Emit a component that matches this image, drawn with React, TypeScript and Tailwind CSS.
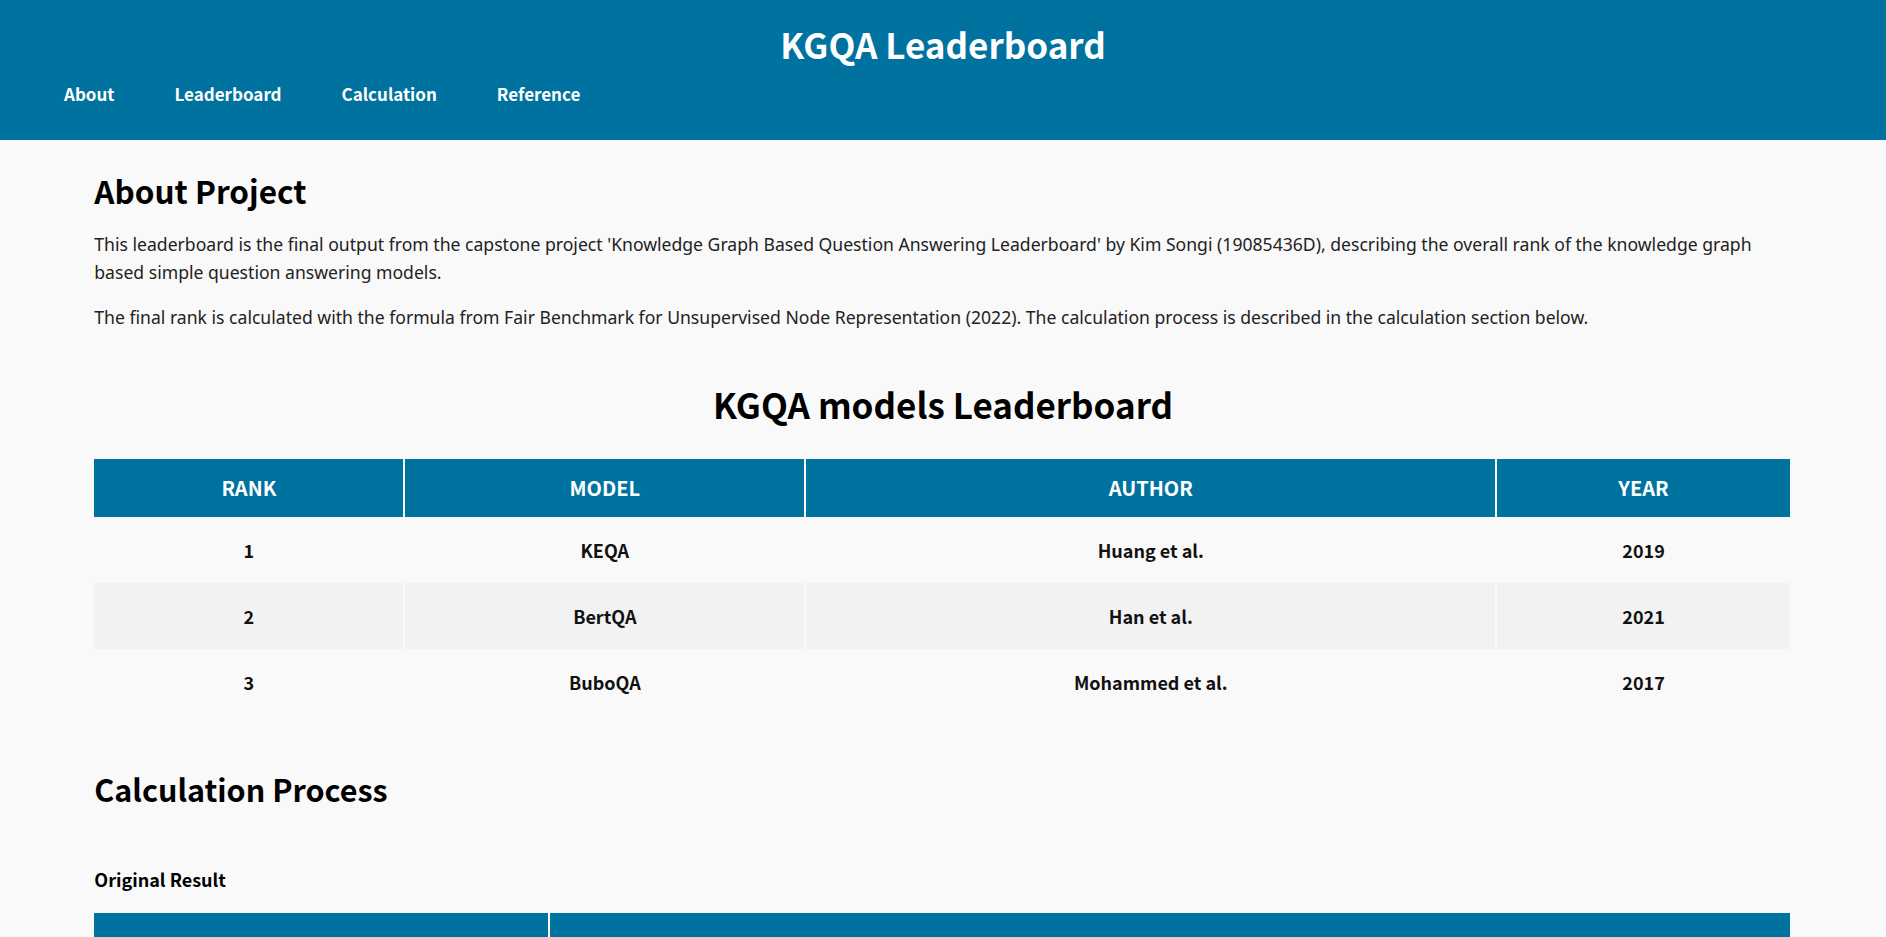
import React from "react";

const font = { fontFamily: '"Noto Sans CJK KR", "Noto Sans", sans-serif' };
const body = { fontFamily: '"Noto Sans", "Noto Sans CJK KR", sans-serif' };

const rows = [
  { rank: "1", model: "KEQA", author: "Huang et al.", year: "2019" },
  { rank: "2", model: "BertQA", author: "Han et al.", year: "2021" },
  { rank: "3", model: "BuboQA", author: "Mohammed et al.", year: "2017" },
];

export default function App() {
  return (
    <div className="min-h-screen bg-[#f9f9f9] text-[#111]" style={font}>
      <header className="bg-[#00729f] h-[140px] text-white">
        <h1 className="pt-[22px] text-center text-[35px] font-bold leading-[44px]">KGQA Leaderboard</h1>
        <nav className="mt-[16px] flex pl-[64px] gap-[60px] text-[17px] font-bold leading-[24px]">
          <a>About</a>
          <a>Leaderboard</a>
          <a>Calculation</a>
          <a>Reference</a>
        </nav>
      </header>

      <main className="w-[90%] mx-auto">
        <section className="pt-[30px]">
          <h2 className="text-[31.5px] font-bold leading-[40px] text-black">About Project</h2>
          <p className="mt-[20px] text-[17.6px] leading-[28px] text-[#222]" style={body}>
            This leaderboard is the final output from the capstone project 'Knowledge Graph Based Question Answering Leaderboard' by Kim Songi (19085436D), describing the overall rank of the knowledge graph
            <br />
            based simple question answering models.
          </p>
          <p className="mt-[17px] text-[17.6px] leading-[28px] text-[#222]" style={body}>
            The final rank is calculated with the formula from Fair Benchmark for Unsupervised Node Representation (2022). The calculation process is described in the calculation section below.
          </p>
        </section>

        <section className="pt-[51px]">
          <h1 className="text-center text-[35px] font-bold leading-[44px] text-black">KGQA models Leaderboard</h1>
          <table className="mt-[33px] border-separate border-spacing-x-[2px] border-spacing-y-0 -ml-[2px] text-[18px] font-bold" style={{ width: "calc(100% + 2px)" }}>
            <thead>
              <tr className="bg-[#00729f] text-white h-[58px] text-[20px]">
                <th className="w-[18.3%] font-bold">RANK</th>
                <th className="w-[23.6%] font-bold">MODEL</th>
                <th className="w-[40.8%] font-bold">AUTHOR</th>
                <th className="font-bold">YEAR</th>
              </tr>
            </thead>
            <tbody>
              {rows.map((r, i) => (
                <tr key={r.rank} className={i % 2 === 1 ? "bg-[#f2f2f2] h-[66px]" : "h-[66px]"}>
                  <td className="text-center">{r.rank}</td>
                  <td className="text-center">{r.model}</td>
                  <td className="text-center">{r.author}</td>
                  <td className="text-center">{r.year}</td>
                </tr>
              ))}
            </tbody>
          </table>
        </section>

        <section className="pt-[54px]">
          <h2 className="text-[30.5px] font-bold leading-[40px] text-black">Calculation Process</h2>
          <h4 className="mt-[58px] text-[18px] font-bold leading-[24px] text-black">Original Result</h4>
          <table className="mt-[22px] border-separate border-spacing-x-[2px] border-spacing-y-0 -ml-[2px] text-[18px] font-bold" style={{ width: "calc(100% + 2px)" }}>
            <thead>
              <tr className="bg-[#00729f] text-white h-[58px] text-[20px]">
                <th className="w-[26.8%] font-bold"></th>
                <th className="font-bold"></th>
              </tr>
            </thead>
          </table>
        </section>
      </main>
    </div>
  );
}
